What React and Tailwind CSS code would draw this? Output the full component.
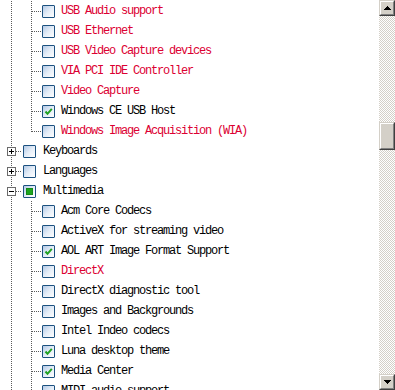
import React from 'react';

const RED = '#dc0032';

// tree rows: level, label, state, red flag, expander, last child
const rows = [
  { level: 2, label: 'USB Audio support', red: true },
  { level: 2, label: 'USB Ethernet', red: true },
  { level: 2, label: 'USB Video Capture devices', red: true },
  { level: 2, label: 'VIA PCI IDE Controller', red: true },
  { level: 2, label: 'Video Capture', red: true },
  { level: 2, label: 'Windows CE USB Host', state: 'checked' },
  { level: 2, label: 'Windows Image Acquisition (WIA)', red: true, last: true },
  { level: 1, label: 'Keyboards', expander: '+' },
  { level: 1, label: 'Languages', expander: '+' },
  { level: 1, label: 'Multimedia', expander: '-', state: 'partial' },
  { level: 2, label: 'Acm Core Codecs' },
  { level: 2, label: 'ActiveX for streaming video' },
  { level: 2, label: 'AOL ART Image Format Support', state: 'checked' },
  { level: 2, label: 'DirectX', red: true },
  { level: 2, label: 'DirectX diagnostic tool' },
  { level: 2, label: 'Images and Backgrounds' },
  { level: 2, label: 'Intel Indeo codecs' },
  { level: 2, label: 'Luna desktop theme', state: 'checked' },
  { level: 2, label: 'Media Center', state: 'checked' },
  { level: 2, label: 'MIDI audio support' },
];

const DOT = '#5a5a5a';

function Guide() {
  return (
    <svg width="20" height="20" className="shrink-0" shapeRendering="crispEdges">
      <line x1="10.5" y1="0" x2="10.5" y2="20" stroke={DOT} strokeDasharray="1 1" />
    </svg>
  );
}

function Connector({ last, expander }) {
  return (
    <svg width="20" height="20" className="shrink-0" shapeRendering="crispEdges">
      <line x1="10.5" y1="0" x2="10.5" y2={last ? 11 : 20} stroke={DOT} strokeDasharray="1 1" />
      <line x1="11" y1="10.5" x2="20" y2="10.5" stroke={DOT} strokeDasharray="1 1" />
      {expander && (
        <g>
          <rect x="6.5" y="6.5" width="8" height="8" fill="#fff" stroke="#6b6b6b" />
          <line x1="8" y1="10.5" x2="13" y2="10.5" stroke="#000" />
          {expander === '+' && <line x1="10.5" y1="8" x2="10.5" y2="13" stroke="#000" />}
        </g>
      )}
    </svg>
  );
}

function CheckBox({ state }) {
  return (
    <div className="relative w-[13px] h-[13px] shrink-0 border border-[#1c5180] rounded-[1px] bg-gradient-to-br from-[#b4c9e4] via-[#e4edf8] to-white">
      {state === 'checked' && (
        <svg width="11" height="11" className="absolute left-0 top-0">
          <polyline points="2.5,5.5 4.5,7.8 8.8,2.8" fill="none" stroke="#21a121" strokeWidth="2" />
        </svg>
      )}
      {state === 'partial' && (
        <div className="absolute left-[2px] top-[2px] w-[7px] h-[7px] bg-[#1ea51e] border border-[#178a17]" />
      )}
    </div>
  );
}

function TreeRow({ row }) {
  return (
    <div className="flex items-center h-5">
      {row.level === 2 && <Guide />}
      <Connector last={row.last} expander={row.expander} />
      <div className={row.level === 1 ? 'ml-[2px]' : 'ml-px'}>
        <CheckBox state={row.state} />
      </div>
      <span
        className={`${row.level === 1 ? 'ml-[7px]' : 'ml-[6px]'} whitespace-nowrap font-[family-name:'Liberation_Mono',monospace] text-[12px] tracking-[-1.2px] leading-5`}
        style={{ color: row.red ? RED : '#000' }}
      >
        {row.label}
      </span>
    </div>
  );
}

function ArrowButton({ down }) {
  return (
    <div className="w-4 h-4 shrink-0 bg-[#d4d0c8] border border-t-[#d4d0c8] border-l-[#d4d0c8] border-r-[#404040] border-b-[#404040] flex">
      <div className="flex-1 border border-t-white border-l-white border-r-[#808080] border-b-[#808080] flex items-center justify-center">
        <svg width="7" height="4" shapeRendering="crispEdges">
          <polygon points={down ? '0,0 7,0 3.5,4' : '3.5,0 7,4 0,4'} fill="#000" />
        </svg>
      </div>
    </div>
  );
}

function ScrollBar() {
  return (
    <div className="w-4 h-[390px] flex flex-col shrink-0">
      <ArrowButton />
      <div className="flex-1 flex flex-col bg-[repeating-conic-gradient(#d4d0c8_0%_25%,#ffffff_0%_50%)] bg-[length:2px_2px]">
        <div className="h-[106px]" />
        <div className="w-4 h-[28px] bg-[#d4d0c8] border border-t-[#d4d0c8] border-l-[#d4d0c8] border-r-[#404040] border-b-[#404040] flex">
          <div className="flex-1 border border-t-white border-l-white border-r-[#808080] border-b-[#808080]" />
        </div>
      </div>
      <ArrowButton down />
    </div>
  );
}

export default function App() {
  return (
    <div className="w-[395px] h-[390px] overflow-hidden bg-white flex">
      <div className="flex-1 overflow-hidden pl-px">
        <div className="mt-px flex flex-col">
          {rows.map((row, i) => (
            <TreeRow key={i} row={row} />
          ))}
        </div>
      </div>
      <ScrollBar />
    </div>
  );
}
